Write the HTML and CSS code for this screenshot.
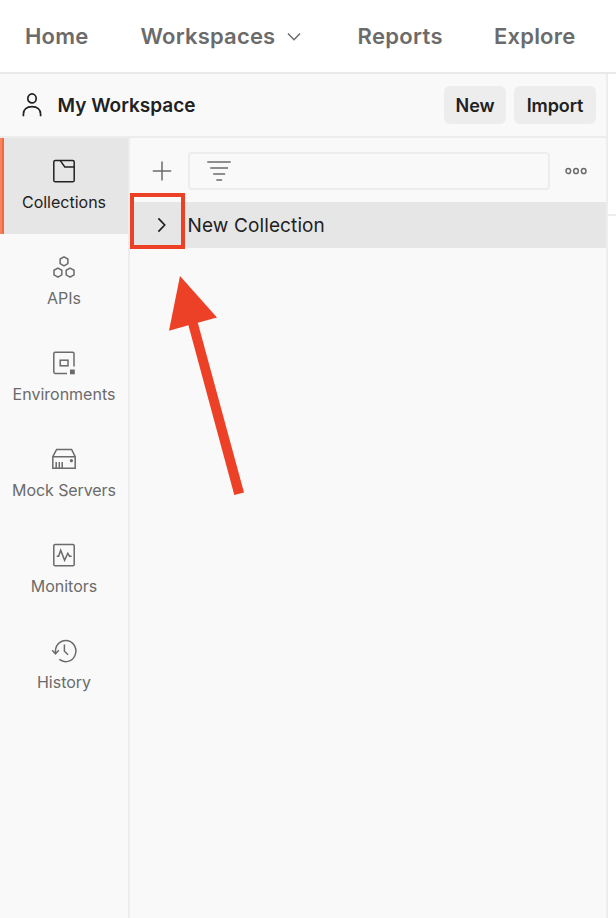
FILE: index.html
```html
<!DOCTYPE html>
<html lang="en">
<head>
<meta charset="utf-8">
<title>My Workspace</title>
<link rel="stylesheet" href="styles.css">
</head>
<body>
<div class="app">
  <nav class="topnav">
    <a class="nav-home">Home</a>
    <a class="nav-workspaces">Workspaces</a>
    <svg class="nav-chevron" width="14" height="10" viewBox="0 0 14 10"><path d="M1 1.5 7 7.7 13 1.5"/></svg>
    <a class="nav-reports">Reports</a>
    <a class="nav-explore">Explore</a>
  </nav>
  <div class="content">
    <section class="workspace">
      <header class="workspace-header">
        <svg class="user" width="20" height="24" viewBox="0 0 20 24"><ellipse cx="10" cy="5.4" rx="4.2" ry="4.5"/><path d="M1.4 23.2v-2c0-4.7 3.3-7.6 8.6-7.6s8.6 2.9 8.6 7.6v2"/></svg>
        <h1>My Workspace</h1>
        <button class="btn-new">New</button>
        <button class="btn-import">Import</button>
      </header>
      <div class="workspace-body">
        <aside class="sidebar">
          <a class="item active">
            <svg width="24" height="24" viewBox="0 0 24 24"><rect x="1.8" y="1.4" width="20.4" height="21.4" rx="1.6"/><path d="M8.3 1.6 12.8 7.9H22"/></svg>
            <span>Collections</span>
          </a>
          <a class="item">
            <svg width="24" height="24" viewBox="0 0 24 24"><path d="M12 1.8 15.9 4V8.6L12 10.8 8.1 8.6V4ZM5.9 13.1 9.8 15.3v4.6L5.9 22.1 2 19.9v-4.6ZM18.1 13.1 22 15.3v4.6L18.1 22.1 14.2 19.9v-4.6Z"/></svg>
            <span>APIs</span>
          </a>
          <a class="item">
            <svg width="24" height="24" viewBox="0 0 24 24"><path d="M15 22.4H3.2Q1.8 22.4 1.8 21V2.6Q1.8 1.2 3.2 1.2H20.6Q22 1.2 22 2.6V15.4"/><rect x="8.2" y="9.2" width="7.8" height="5.6"/><path class="solid" d="M18 18.5h4.8v4.8H18Z"/></svg>
            <span>Environments</span>
          </a>
          <a class="item">
            <svg width="24" height="24" viewBox="0 0 24 24"><path d="M.8 9.7 4.6 2.5H19.6L23.2 9.7V21.2H.8ZM.8 9.7H23.2M4.2 14.9v6M7.3 14.9v6M10.2 14.9v6"/><circle class="solid" cx="19.4" cy="13.7" r="1.6"/></svg>
            <span class="mocks">Mock Servers</span>
          </a>
          <a class="item">
            <svg width="24" height="24" viewBox="0 0 24 24"><rect x="1.8" y="1.4" width="20.4" height="21.4" rx="1.3"/><path d="M4.7 13.2H6.6L8.7 7.2 12.6 17.3 15.8 10.3 17.5 13.2H19.7"/></svg>
            <span>Monitors</span>
          </a>
          <a class="item">
            <svg width="26" height="24" viewBox="0 0 26 24"><path d="M4.5 14.2V11.7A10.2 10.6 0 1 1 8.4 20.4M1.2 11.3 4.5 14.9 7.8 11.3M13.4 5.5V12.3L17.1 15.8"/></svg>
            <span>History</span>
          </a>
        </aside>
        <main class="panel">
          <div class="toolbar">
            <svg class="plus" width="20" height="20" viewBox="0 0 20 20"><path d="M10 .5v19M.8 10h18.4"/></svg>
            <div class="filter">
              <svg width="24" height="22" viewBox="0 0 24 22"><path d="M.3 2H23.7M3.2 8H21M6.2 14H18.2M9.3 20H15.2"/></svg>
            </div>
            <svg class="more" width="22" height="8" viewBox="0 0 22 8"><ellipse cx="3.3" cy="4" rx="2.3" ry="2.6"/><ellipse cx="11" cy="4" rx="2.3" ry="2.6"/><ellipse cx="18.7" cy="4" rx="2.3" ry="2.6"/></svg>
          </div>
          <div class="collection">
            <svg width="10" height="16" viewBox="0 0 10 16"><path d="M1.4 1.4 7.7 8 1.4 14.6"/></svg>
            <span>New Collection</span>
          </div>
        </main>
      </div>
    </section>
    <section class="editor"><div class="tabs"></div></section>
  </div>
  <div class="highlight"></div>
  <svg class="arrow" width="76" height="220" viewBox="0 0 76 220"><path d="M12 0 49 41.5 29.8 46.8 76 216.4 66.3 219 20.4 49.3 1 54.8Z"/></svg>
</div>
</body>
</html>
```
FILE: styles.css
```css
* { box-sizing: border-box; }
body { margin: 0; font-family: Inter, "Liberation Sans", sans-serif; background: #fff; color: #212121; }
svg { display: block; flex: none; fill: none; stroke: currentColor; stroke-width: 1.5; }
.solid { fill: currentColor; stroke: none; }
.app { position: relative; width: 616px; height: 918px; display: flex; flex-direction: column; overflow: hidden; }
.topnav { height: 74px; flex: none; display: flex; align-items: center; padding: 0 0 1px 25px; border-bottom: 2px solid #e9e9e9; font-size: 22px; line-height: 28px; font-weight: 600; letter-spacing: .2px; color: #6b6b6b; white-space: nowrap; }
.nav-home { width: 115.5px; }
.nav-workspaces { width: 146.5px; }
.nav-chevron { width: 14px; margin: 3px 56.5px 0 0; }
.nav-reports { width: 136.5px; letter-spacing: .35px; }
.content { flex: 1; display: flex; min-height: 0; }
.workspace { width: 608px; display: flex; flex-direction: column; border-right: 2px solid #ededed; background: #f9f9f9; }
.workspace-header { height: 64px; flex: none; display: flex; align-items: center; padding: 0 10px 0 22px; border-bottom: 2px solid #ededed; }
.user { stroke-width: 1.7; }
h1 { flex: 1; margin: 0 0 0 15.5px; padding-top: 2px; font-size: 19px; line-height: 24px; font-weight: 600; white-space: nowrap; }
button { height: 38px; padding: 2px 0 0; border: 0; border-radius: 6px; background: #ededed; color: #212121; font: 600 18px/24px Inter, "Liberation Sans", sans-serif; letter-spacing: -.1px; }
.btn-new { width: 62px; margin-right: 8px; }
.btn-import { width: 82px; }
.workspace-body { flex: 1; display: flex; }
.sidebar { width: 130px; border-right: 2px solid #ededed; color: #6b6b6b; }
.item { width: 128px; height: 96px; display: flex; flex-direction: column; align-items: center; padding-top: 21px; font-size: 16px; line-height: 20px; white-space: nowrap; }
.item span { margin-top: 9px; }
.item .mocks { letter-spacing: -.08px; }
.item.active { color: #212121; background: linear-gradient(90deg, #f58460 0 2px, #f26b3a 2px 4px, #e6e6e6 4px); }
.panel { flex: 1; }
.toolbar { height: 64px; display: flex; align-items: center; padding: 2px 19px 0 22px; color: #6b6b6b; }
.filter { width: 362px; height: 38px; margin: 0 15px 0 16px; padding: 6px 17px; border: 2px solid #ededed; border-radius: 4px; }
.collection { height: 46px; display: flex; align-items: center; padding-left: 27px; background: #e6e6e6; font-size: 19px; line-height: 26px; letter-spacing: .12px; white-space: nowrap; }
.collection svg { stroke-width: 1.7; }
.collection span { margin-left: 20.5px; padding-top: 1px; }
.editor { flex: 1; }
.tabs { height: 142px; border-bottom: 2px solid #ededed; }
.highlight { position: absolute; left: 130px; top: 193px; width: 55px; height: 56px; border: 4px solid #ed4127; }
.arrow { position: absolute; left: 168px; top: 276px; fill: #ed4127; stroke: none; }
```
